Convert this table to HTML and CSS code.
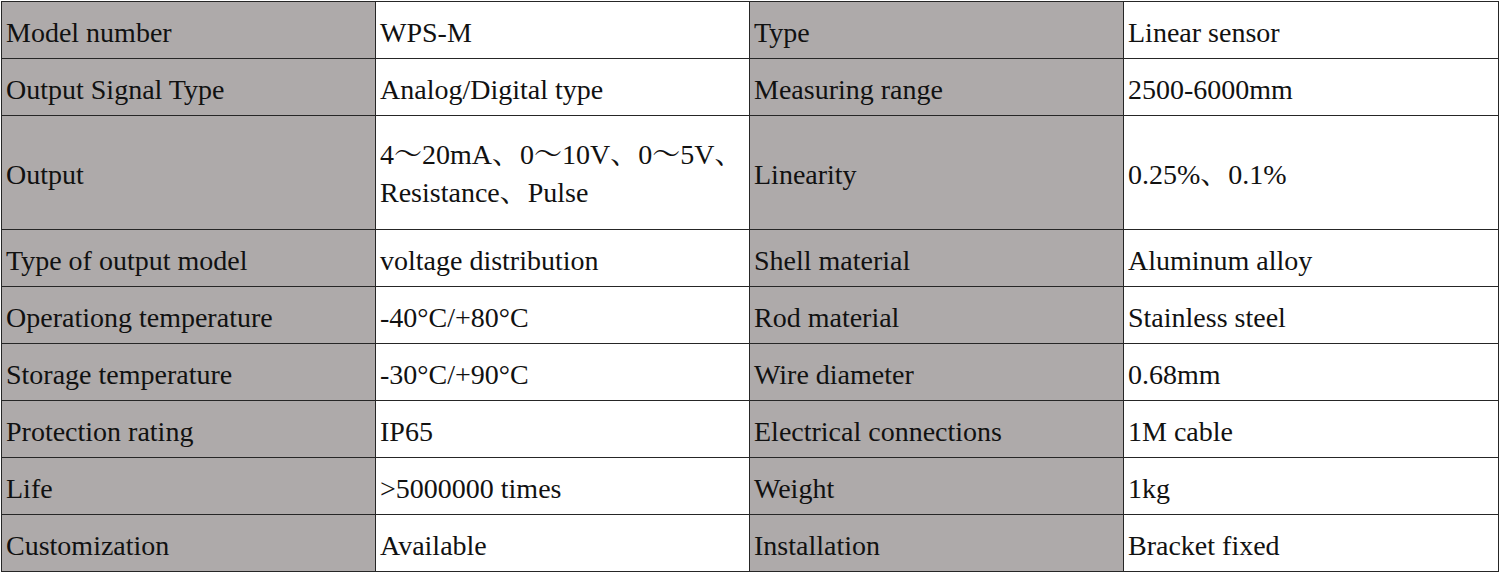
FILE: index.html
```html
<!DOCTYPE html>
<html lang="en">
<head>
<meta charset="utf-8">
<title>WPS-M specifications</title>
<link rel="stylesheet" href="styles.css">
</head>
<body>
<table class="spec">
  <colgroup>
    <col class="c1"><col class="c2"><col class="c3"><col class="c4">
  </colgroup>
  <tbody>
    <tr><td class="label">Model number</td><td>WPS-M</td><td class="label">Type</td><td>Linear sensor</td></tr>
    <tr><td class="label">Output Signal Type</td><td>Analog/Digital type</td><td class="label">Measuring range</td><td>2500-6000mm</td></tr>
    <tr class="tall"><td class="label">Output</td><td class="multi">4～20mA、0～10V、0～5V、<br>Resistance、Pulse</td><td class="label">Linearity</td><td>0.25%、0.1%</td></tr>
    <tr><td class="label">Type of output model</td><td>voltage distribution</td><td class="label">Shell material</td><td>Aluminum alloy</td></tr>
    <tr><td class="label">Operationg temperature</td><td>-40°C/+80°C</td><td class="label">Rod material</td><td>Stainless steel</td></tr>
    <tr><td class="label">Storage temperature</td><td>-30°C/+90°C</td><td class="label">Wire diameter</td><td>0.68mm</td></tr>
    <tr><td class="label">Protection rating</td><td>IP65</td><td class="label">Electrical connections</td><td>1M cable</td></tr>
    <tr><td class="label">Life</td><td>&gt;5000000 times</td><td class="label">Weight</td><td>1kg</td></tr>
    <tr><td class="label">Customization</td><td>Available</td><td class="label">Installation</td><td>Bracket fixed</td></tr>
  </tbody>
</table>
</body>
</html>
```

FILE: styles.css
```css
html, body {
  margin: 0;
  padding: 0;
  background: #ffffff;
}

body {
  padding: 1px 0 0 1px;
}

.spec {
  border-collapse: collapse;
  table-layout: fixed;
  width: 1497px;
  font-family: "Liberation Serif", "Noto Serif CJK SC", "Noto Sans CJK SC", serif;
  font-size: 28px;
  color: #111111;
}

.c1, .c2, .c3 { width: 374px; }
.c4 { width: 375px; }

.spec tr { height: 57px; }
.spec tr.tall { height: 114px; }

.spec td {
  border: 1px solid #262626;
  padding: 5px 4px 0;
  vertical-align: middle;
  white-space: nowrap;
  line-height: 32px;
  background: #ffffff;
}

.spec td.label {
  background: #aeaaaa;
}

.spec td.multi {
  line-height: 38px;
  padding-top: 2px;
}
```
